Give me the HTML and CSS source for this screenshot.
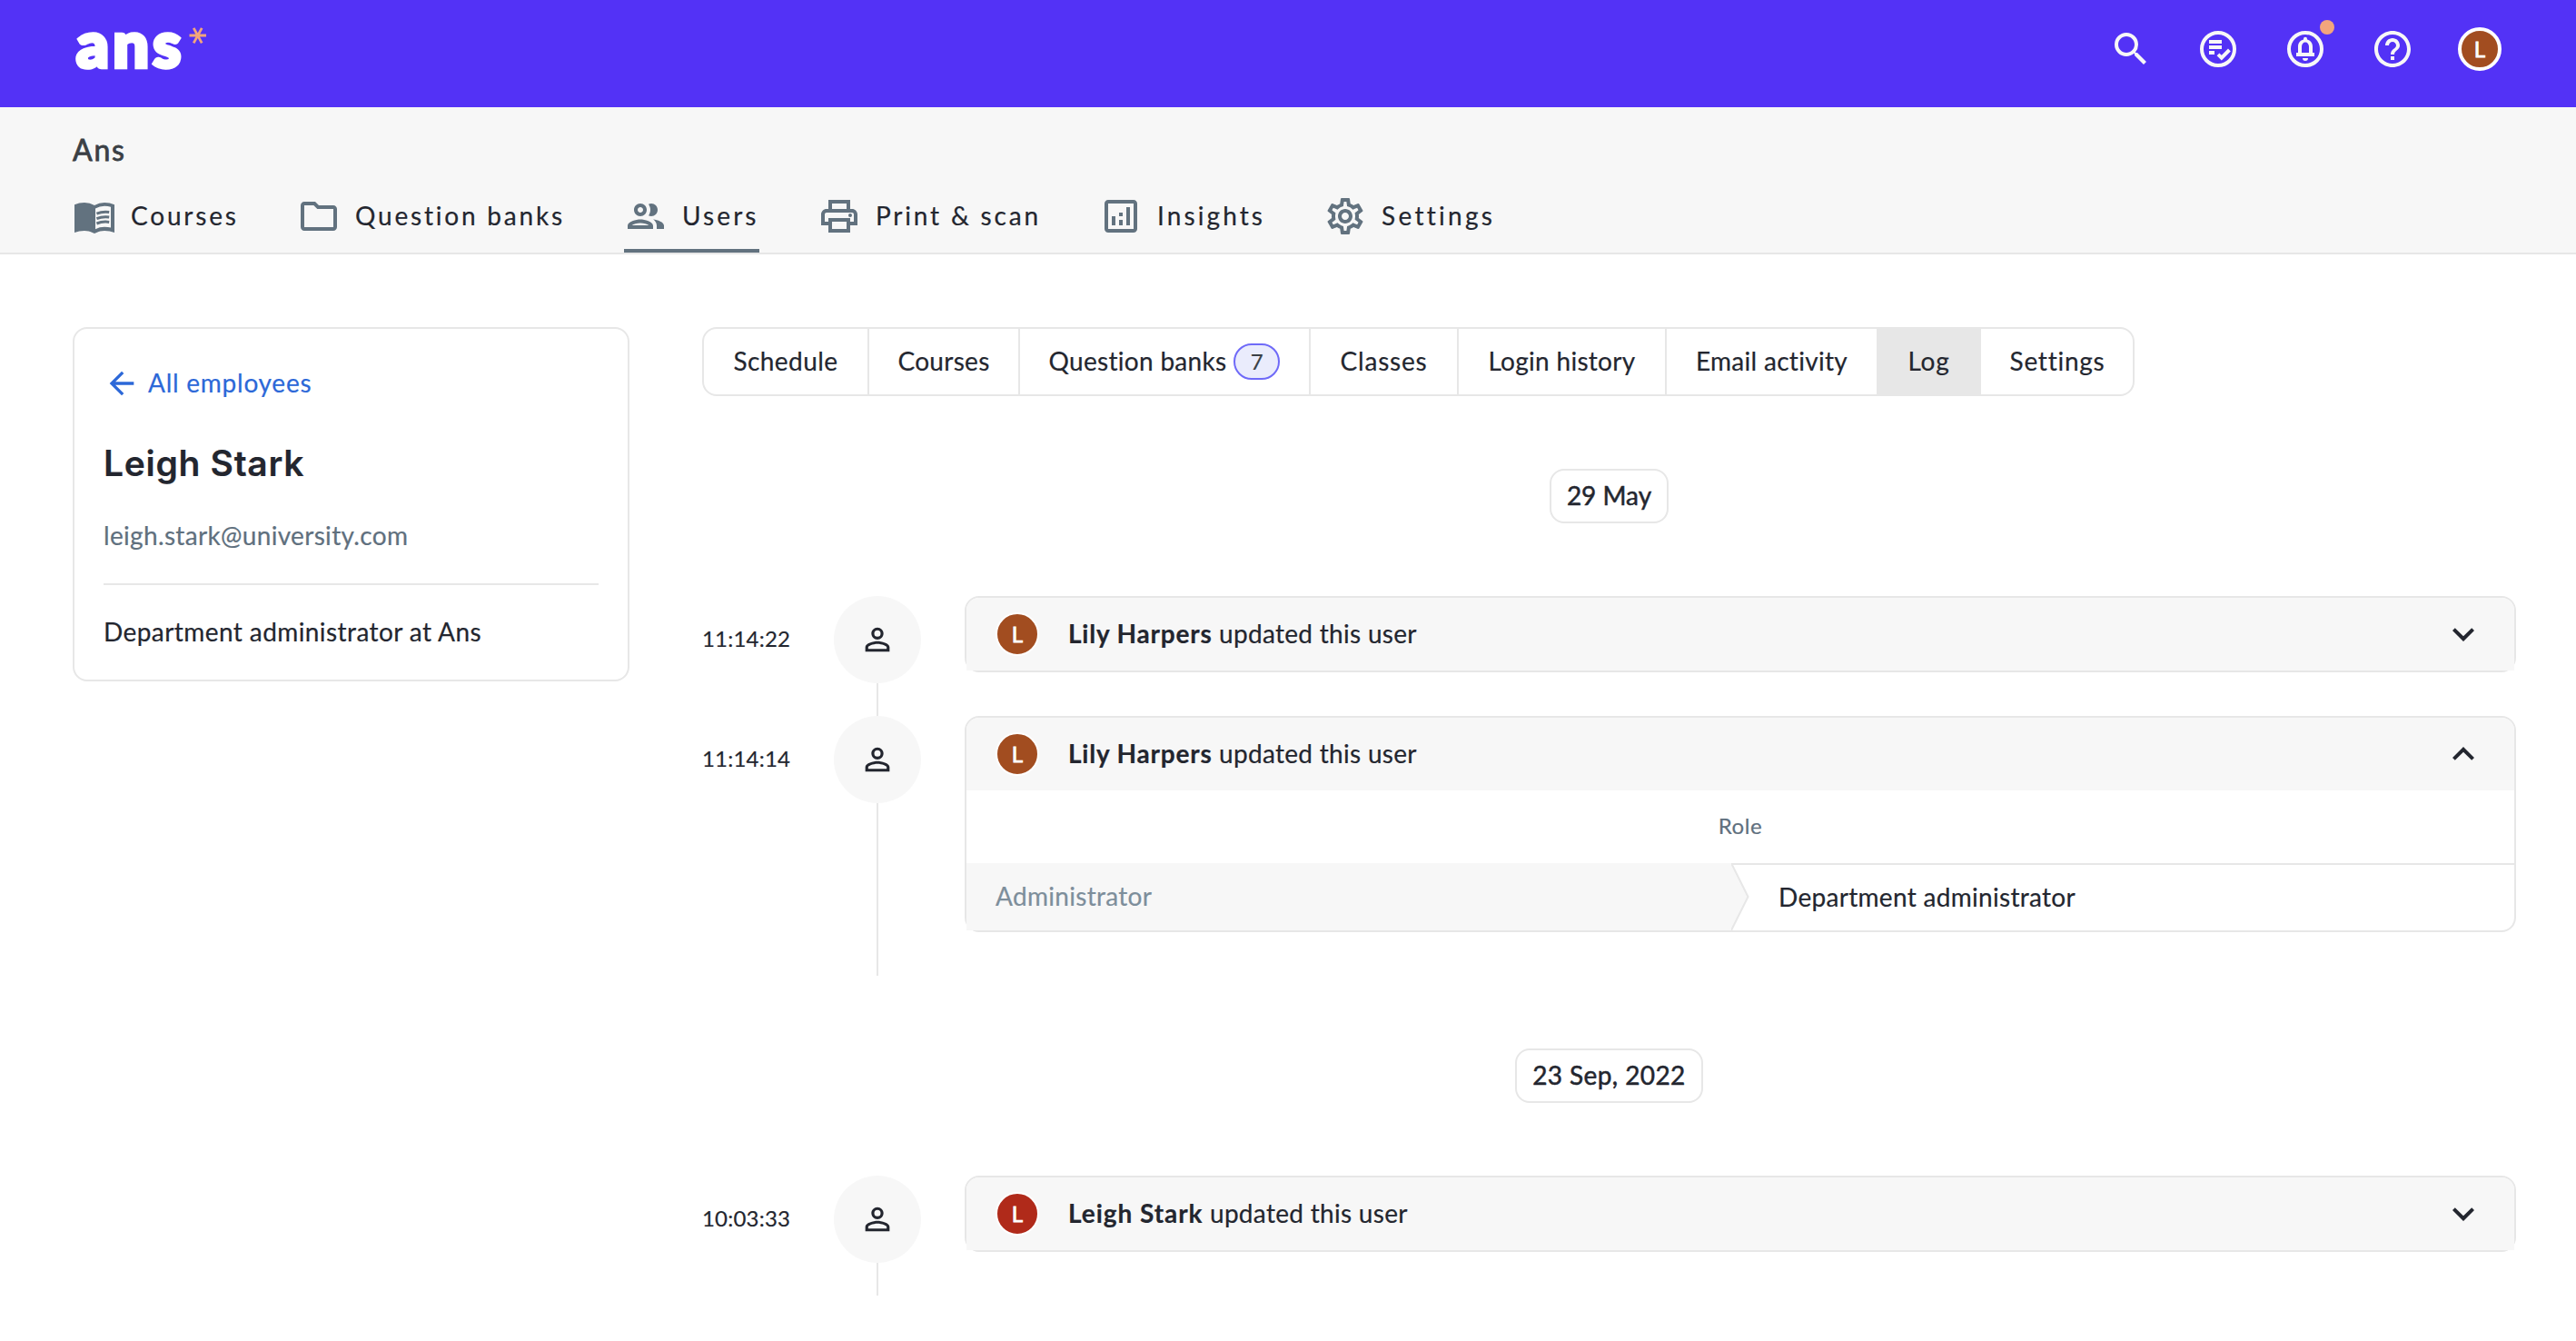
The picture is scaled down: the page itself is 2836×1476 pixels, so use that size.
FILE: index.html
```html
<!DOCTYPE html>
<html lang="en">
<head>
<meta charset="utf-8">
<title>Leigh Stark - Log</title>
<link rel="stylesheet" href="styles.css">
</head>
<body>
<svg class="sprite" aria-hidden="true">
  <symbol id="i-person" viewBox="0 0 24 24"><path d="M12 5.9a2.1 2.1 0 1 1 0 4.2 2.1 2.1 0 0 1 0-4.2m0 9c2.97 0 6.1 1.46 6.1 2.1v1.1H5.9V17c0-.64 3.13-2.1 6.1-2.1M12 4C9.79 4 8 5.79 8 8s1.79 4 4 4 4-1.79 4-4-1.79-4-4-4zm0 9c-2.67 0-8 1.34-8 4v3h16v-3c0-2.66-5.33-4-8-4z"/></symbol>
  <symbol id="i-down" viewBox="0 0 24 24"><path d="M7.41 8.59 12 13.17l4.59-4.58L18 10l-6 6-6-6z"/></symbol>
  <symbol id="i-up" viewBox="0 0 24 24"><path d="M7.41 15.41 12 10.83l4.59 4.58L18 14l-6-6-6 6z"/></symbol>
</svg>

<header class="topbar">
  <a class="logo"><span class="logo-word">ans</span>
    <svg class="logo-star" viewBox="0 0 20 20"><path d="M.5 9h18.500M5.200 .8l9 16.600M14.200 .8l-9 16.600"/></svg>
  </a>
  <div class="actions">
    <svg class="icon" viewBox="0 0 24 24"><path d="M15.5 14h-.79l-.28-.27A6.47 6.47 0 0 0 16 9.5 6.5 6.5 0 1 0 9.5 16c1.61 0 3.09-.59 4.23-1.57l.27.28v.79l5 4.99L20.49 19l-4.99-5zm-6 0C7.01 14 5 11.99 5 9.5S7.01 5 9.5 5 14 7.01 14 9.5 11.99 14 9.5 14z"/></svg>
    <svg class="icon" viewBox="0 0 24 24"><circle class="line" cx="12" cy="12" r="9"/><path d="M7 7h7v2H7zM7 10h7v2H7zM7 13h3v2H7z"/><path class="line check" d="M12 14.9l1.9 1.9 4.3-4.3"/></svg>
    <span class="bell">
      <svg class="icon" viewBox="0 0 24 24"><circle class="line" cx="12" cy="12" r="9"/><path d="M7 14h1v-3.3C8 8.7 9.200 7.200 11 6.800v-.4a1 1 0 0 1 2 0v.4c1.800.4 3 1.900 3 3.900V14h1v2H7zM10 14h4v-3.200c0-1.500-.8-2.500-2-2.500s-2 1-2 2.500zM10.500 17h3a1.500 1.500 0 0 1-3 0z" fill-rule="evenodd"/></svg>
      <i class="dot"></i>
    </span>
    <svg class="icon" viewBox="0 0 24 24"><path d="M11 18h2v-2h-2v2zm1-16C6.480 2 2 6.480 2 12s4.480 10 10 10 10-4.480 10-10S17.520 2 12 2zm0 18c-4.410 0-8-3.590-8-8s3.590-8 8-8 8 3.590 8 8-3.590 8-8 8zm0-14c-2.210 0-4 1.790-4 4h2c0-1.100.9-2 2-2s2 .9 2 2c0 2-3 1.750-3 5h2c0-2.250 3-2.500 3-5 0-2.210-1.790-4-4-4z"/></svg>
    <span class="avatar avatar-me">L</span>
  </div>
</header>

<section class="subbar">
  <h2 class="school">Ans</h2>
  <nav class="nav">
    <a class="nav-item"><svg class="icon" viewBox="0 0 24 24"><path fill-rule="evenodd" d="M1 5.600Q3.500 4.500 6.500 4.500T12 6q2.500-1.500 5.500-1.500T23 5.600V21q-2.500-1-5.500-1T12 21.500Q9.500 20 6.500 20T1 21zM12.500 7.700v11.400q2.300-1.200 5-1.200 2 0 3.500.4V6.900q-1.500-.5-3.500-.5-2.700 0-5 1.300z"/><path class="rule" d="M13.200 10.600q3.200-1.300 6.900-.8M13.200 13.300q3.200-1.300 6.900-.8M13.200 16q3.200-1.300 6.900-.8"/></svg><span class="t-courses">Courses</span></a>
    <a class="nav-item"><svg class="icon" viewBox="0 0 24 24"><path d="M9.170 6l2 2H20v10H4V6h5.170M10 4H4c-1.100 0-1.990.9-1.990 2L2 18c0 1.100.9 2 2 2h16c1.100 0 2-.9 2-2V8c0-1.100-.9-2-2-2h-8l-2-2z"/></svg><span class="t-banks">Question banks</span></a>
    <a class="nav-item active"><svg class="icon" viewBox="0 0 24 24"><path d="M9 12c1.930 0 3.500-1.570 3.500-3.500S10.930 5 9 5 5.500 6.570 5.500 8.500 7.070 12 9 12zm0-5c.83 0 1.500.67 1.500 1.500S9.830 10 9 10s-1.500-.67-1.500-1.500S8.170 7 9 7zm0 6.750c-2.340 0-7 1.170-7 3.500V19h14v-1.750c0-2.330-4.660-3.500-7-3.500zM4.340 17c.84-.58 2.870-1.250 4.660-1.250s3.820.67 4.660 1.250H4.340zm11.700-3.190c1.160.84 1.960 1.960 1.960 3.440V19h4v-1.750c0-2.020-3.500-3.170-5.960-3.440zM15 12c1.930 0 3.500-1.570 3.500-3.500S16.930 5 15 5c-.54 0-1.040.13-1.500.35.63.89 1 1.980 1 3.150s-.37 2.260-1 3.150c.46.22.96.35 1.500.35z"/></svg><span class="t-users">Users</span></a>
    <a class="nav-item"><svg class="icon" viewBox="0 0 24 24"><path d="M19 8h-1V3H6v5H5c-1.660 0-3 1.340-3 3v6h4v4h12v-4h4v-6c0-1.660-1.340-3-3-3zM8 5h8v3H8V5zm8 12v2H8v-4h8v2zm2-2v-2H6v2H4v-4c0-.55.45-1 1-1h14c.55 0 1 .45 1 1v4h-2z"/><circle cx="18" cy="11.500" r="1"/></svg><span class="t-print">Print &amp; scan</span></a>
    <a class="nav-item"><svg class="icon" viewBox="0 0 24 24"><path d="M19 3H5c-1.100 0-2 .9-2 2v14c0 1.100.9 2 2 2h14c1.100 0 2-.9 2-2V5c0-1.100-.9-2-2-2zm0 16H5V5h14v14zM7 12h2v5H7zM15 7h2v10h-2zM11 14h2v3h-2zM11 10h2v2h-2z"/></svg><span class="t-insights">Insights</span></a>
    <a class="nav-item"><svg class="icon" viewBox="0 0 24 24"><path d="M19.430 12.980c.04-.32.07-.64.07-.98 0-.34-.03-.66-.07-.98l2.110-1.650c.19-.15.24-.42.12-.64l-2-3.460c-.09-.16-.26-.25-.44-.25-.06 0-.12.010-.17.030l-2.490 1c-.52-.4-1.080-.73-1.690-.98l-.38-2.650C14.460 2.180 14.250 2 14 2h-4c-.25 0-.46.18-.49.42l-.38 2.650c-.61.25-1.170.59-1.690.98l-2.490-1c-.06-.02-.12-.03-.18-.03-.17 0-.34.09-.43.25l-2 3.460c-.13.22-.07.49.12.64l2.110 1.650c-.04.32-.07.65-.07.98 0 .33.030.66.070.98l-2.110 1.650c-.19.150-.24.420-.12.640l2 3.460c.09.160.26.250.44.250.06 0 .12-.01.170-.03l2.490-1c.52.400 1.080.730 1.690.980l.38 2.650c.03.240.24.420.49.420h4c.25 0 .46-.18.490-.42l.38-2.650c.61-.25 1.170-.59 1.690-.98l2.490 1c.06.020.12.030.18.030.17 0 .34-.09.430-.25l2-3.460c.12-.22.070-.49-.12-.64l-2.110-1.650zm-1.980-1.710c.04.310.05.520.05.730 0 .21-.02.430-.05.730l-.14 1.130.89.700 1.080.840-.7 1.210-1.270-.51-1.040-.42-.9.680c-.43.320-.84.560-1.250.730l-1.060.430-.16 1.130-.2 1.350h-1.400l-.19-1.350-.16-1.130-1.060-.43c-.43-.18-.83-.41-1.230-.71l-.91-.7-1.060.430-1.270.510-.7-1.210 1.080-.84.890-.7-.14-1.130c-.03-.31-.05-.54-.05-.74s.02-.43.050-.73l.14-1.130-.89-.7-1.080-.84.700-1.210 1.270.510 1.040.420.900-.68c.43-.32.840-.56 1.250-.73l1.060-.43.160-1.130.2-1.350h1.390l.19 1.350.16 1.130 1.060.430c.43.180.83.410 1.230.710l.91.700 1.060-.43 1.270-.51.700 1.210-1.070.850-.89.700.14 1.130zM12 8c-2.210 0-4 1.790-4 4s1.790 4 4 4 4-1.790 4-4-1.790-4-4-4zm0 6c-1.100 0-2-.9-2-2s.9-2 2-2 2 .9 2 2-.9 2-2 2z"/></svg><span class="t-settings">Settings</span></a>
  </nav>
</section>

<main class="page">
  <aside class="profile">
    <a class="back"><svg class="icon-md" viewBox="0 0 24 24"><path d="M20 11H7.830l5.590-5.590L12 4l-8 8 8 8 1.410-1.410L7.830 13H20v-2z"/></svg><span class="t-back">All employees</span></a>
    <h1 class="name">Leigh Stark</h1>
    <p class="email">leigh.stark@university.com</p>
    <p class="role">Department administrator at Ans</p>
  </aside>

  <div class="content">
    <nav class="tabs">
      <a class="tab tab-schedule">Schedule</a>
      <a class="tab">Courses</a>
      <a class="tab">Question banks<span class="count">7</span></a>
      <a class="tab tab-classes">Classes</a>
      <a class="tab">Login history</a>
      <a class="tab">Email activity</a>
      <a class="tab tab-log current">Log</a>
      <a class="tab tab-settings">Settings</a>
    </nav>

    <div class="date date-short">29 May</div>
    <div class="event">
      <time class="time">11:14:22</time>
      <div class="rail"><span class="node"><svg class="icon-md" viewBox="0 0 24 24"><use href="#i-person"/></svg></span></div>
      <article class="card">
        <div class="head"><span class="avatar">L</span><p class="summary"><b>Lily Harpers</b> <span>updated this user</span></p><svg class="icon" viewBox="0 0 24 24"><use href="#i-down"/></svg></div>
      </article>
    </div>
    <div class="event">
      <time class="time">11:14:14</time>
      <div class="rail"><span class="node"><svg class="icon-md" viewBox="0 0 24 24"><use href="#i-person"/></svg></span></div>
      <article class="card">
        <div class="head"><span class="avatar">L</span><p class="summary"><b>Lily Harpers</b> <span>updated this user</span></p><svg class="icon" viewBox="0 0 24 24"><use href="#i-up"/></svg></div>
        <div class="field">Role</div>
        <div class="diff">
          <div class="old">Administrator</div>
          <svg class="arrow" viewBox="0 0 20 74"><path class="arrow-fill" d="M0 0L18.500 37 0 74z"/><path class="arrow-line" d="M0 0L18.500 37 0 74"/></svg>
          <div class="new">Department administrator</div>
        </div>
      </article>
    </div>

    <div class="date">23 Sep, 2022</div>
    <div class="event">
      <time class="time">10:03:33</time>
      <div class="rail"><span class="node"><svg class="icon-md" viewBox="0 0 24 24"><use href="#i-person"/></svg></span></div>
      <article class="card">
        <div class="head"><span class="avatar avatar-red">L</span><p class="summary"><b class="b-leigh">Leigh Stark</b> <span>updated this user</span></p><svg class="icon" viewBox="0 0 24 24"><use href="#i-down"/></svg></div>
      </article>
    </div>
  </div>
</main>
</body>
</html>
```
FILE: styles.css
```css
* { box-sizing: border-box; }
body {
  margin: 0;
  background: #fff;
  color: #23262f;
  font: 28px/40px Lato, "Noto Sans", sans-serif;
  letter-spacing: 0.3px;
  -webkit-text-stroke: 0.2px currentColor;
}
h1, h2, p { margin: 0; }
.sprite { display: none; }
.icon { width: 48px; height: 48px; flex: none; display: block; fill: currentColor; }
.icon-md { width: 40px; height: 40px; flex: none; display: block; fill: currentColor; }
.icon .line { fill: none; stroke: currentColor; stroke-width: 2; }

.topbar {
  height: 118px;
  padding: 30px 82px 0 80px;
  display: flex;
  justify-content: space-between;
  align-items: flex-start;
  background: #5332f6;
  color: #f7f7f7;
}
.logo { display: flex; height: 48px; color: #fff; }
.logo-word {
  width: 128px;
  padding-left: 4px;
  font-weight: 900;
  font-size: 70px;
  line-height: 34px;
  letter-spacing: 4.4px;
  -webkit-text-stroke: 4.5px #fff;
}
.logo-star { width: 20px; height: 20px; fill: none; stroke: #f3a57c; stroke-width: 2.8; }
.actions { display: flex; gap: 48px; }
.bell { position: relative; }
.dot { position: absolute; left: 40px; top: -8px; width: 16px; height: 16px; border-radius: 50%; background: #f3a57c; }
.avatar {
  width: 48px; height: 48px;
  flex: none;
  border: 2px solid #fff;
  border-radius: 50%;
  background: #a24d20;
  color: #fff;
  font-size: 24px;
  line-height: 43px;
  text-align: center;
  -webkit-text-stroke: 0.8px #fff;
}
.avatar-me { border-width: 4px; line-height: 39px; }
.avatar-red { background: #b02a1a; }

.subbar { height: 162px; padding: 26px 80px 0; background: #f7f7f7; border-bottom: 2px solid #e7e7e7; }
.school { font-size: 32px; line-height: 42px; font-weight: 400; letter-spacing: 1.8px; color: #3a3f45; -webkit-text-stroke: 0.8px #3a3f45; }
.nav {
  display: grid;
  grid-template-columns: 247px 360px 213px 310px 247px 200px;
  margin-top: 28px;
  letter-spacing: 2.8px;
}
.nav-item { display: flex; justify-self: start; gap: 16px; height: 64px; line-height: 46px; }
.nav-item .icon { color: #62727f; }
.nav-item.active { border-bottom: 4px solid #62727f; }
.t-insights, .t-users { letter-spacing: 3.1px; }
.t-settings { letter-spacing: 3.3px; }
.rule { fill: none; stroke: currentColor; stroke-width: 1.5; }

.page { display: grid; grid-template-columns: 613px 1997px; column-gap: 80px; padding: 80px 66px 0 80px; align-items: start; }
.profile { height: 390px; padding: 40px 32px 0; border: 2px solid #e7e7e7; border-radius: 16px; }
.back { display: flex; gap: 9px; color: #2c68d8; letter-spacing: 0.75px; line-height: 38px; }
.name { margin-top: 40px; font: 600 39px/56px Inter, sans-serif; letter-spacing: 0.7px; }
.email { margin-top: 31px; height: 75px; color: #5f707e; border-bottom: 2px solid #e7e7e7; letter-spacing: 0.33px; }
.role { margin-top: 31px; letter-spacing: 0.42px; }

.tabs { display: grid; grid-template-columns: 182px 166px 320px 163px 229px 233px 113px 171px; width: 1577px; height: 76px; border: 2px solid #e7e7e7; border-radius: 16px; }
.tab { display: flex; align-items: center; justify-content: center; height: 72px; padding-bottom: 2px; border-right: 2px solid #e7e7e7; }
.tab:last-child { border: 0; }
.tab-schedule { letter-spacing: 0.45px; }
.tab-classes, .tab-log { letter-spacing: 0.8px; }
.tab-settings { letter-spacing: 0.75px; padding-right: 3px; }
.current { background: #e7e7e7; }
.count { width: 51px; height: 40px; margin: 2px 0 0 8px; border: 2px solid #6f6af8; border-radius: 20px; background: #eaecfc; color: #3a3f45; font-size: 24px; line-height: 35px; text-align: center; }

.date { width: fit-content; height: 60px; margin: 80px auto; padding: 0 17px; border: 2px solid #e7e7e7; border-radius: 16px; line-height: 54px; letter-spacing: 0.4px; -webkit-text-stroke: 0.5px currentColor; }
.date-short { letter-spacing: 0; }
.event { display: grid; grid-template-columns: 145px 96px 1fr; }
.time { font-size: 24px; line-height: 94px; letter-spacing: 0.2px; }
.rail { min-height: 132px; background: linear-gradient(#e7e7e7, #e7e7e7) center / 2px 100% no-repeat; }
.node { display: grid; place-items: center; height: 96px; border-radius: 50%; background: #f7f7f7; }
.card { margin: 0 0 48px 48px; border: 2px solid #e7e7e7; border-radius: 16px; }
.head { display: flex; align-items: center; height: 80px; padding: 0 32px; background: #f7f7f7; border-radius: 14px 14px 0 0; }
.summary { flex: 1; margin-left: 32px; padding-bottom: 2px; }
.summary b { letter-spacing: 0.8px; }
.summary .b-leigh { letter-spacing: 0.95px; }
.field { height: 80px; font-size: 24px; line-height: 78px; text-align: center; color: #5f707e; letter-spacing: 0.6px; }
.diff { display: grid; grid-template-columns: 842px 20px 1fr; height: 74px; line-height: 72px; }
.old { padding-left: 32px; background: #f7f7f7; color: #7d8e9b; }
.arrow { width: 20px; height: 74px; }
.arrow-fill { fill: #f7f7f7; }
.arrow-line { fill: none; stroke: #e7e7e7; stroke-width: 2; }
.new { margin-left: -20px; padding-left: 52px; border-top: 2px solid #e7e7e7; line-height: 70px; }
```
